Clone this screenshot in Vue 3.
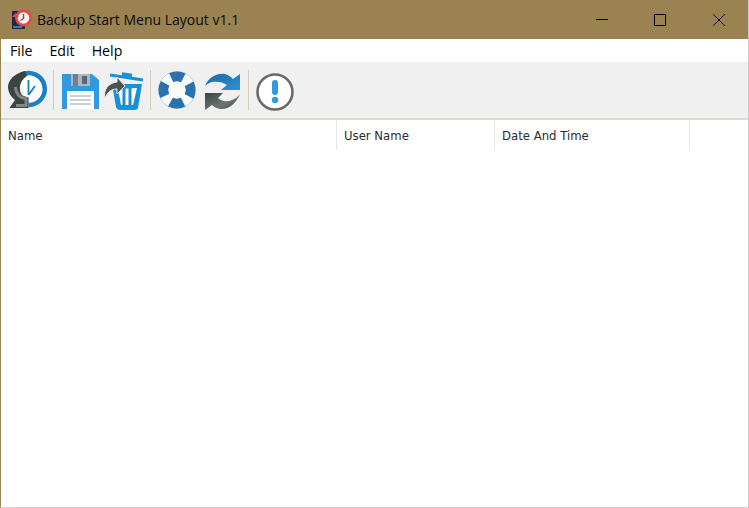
<script setup>
const menus = ['File', 'Edit', 'Help']
const columns = [
  { label: 'Name', width: '336px' },
  { label: 'User Name', width: '158px' },
  { label: 'Date And Time', width: '195px' },
  { label: '', width: '59px' }
]
</script>

<template>
  <div class="window">
    <header class="titlebar">
      <div class="title-left">
        <svg class="app-icon" width="22" height="22" viewBox="0 0 22 22">
          <rect x="1" y="2" width="13" height="18" fill="#1c2a44" />
          <rect x="2" y="17" width="9" height="2" fill="#3a76b8" />
          <circle cx="12.500" cy="9" r="8.500" fill="#e04a42" />
          <circle cx="12.500" cy="9" r="5.800" fill="#eef0f2" />
          <path d="M12.500 5V9.500L9.500 11.500" fill="none" stroke="#b33" stroke-width="1.400" />
          <path d="M1 8l3.500-4 3.500 4z" fill="#e04a42" />
        </svg>
        <span class="title">Backup Start Menu Layout v1.1</span>
      </div>
      <div class="controls">
        <span class="ctl"><svg width="12" height="12" viewBox="0 0 12 12"><path d="M0 5.500H12" stroke="#000" /></svg></span>
        <span class="ctl"><svg width="12" height="12" viewBox="0 0 12 12"><rect x=".5" y=".5" width="11" height="11" fill="none" stroke="#000" /></svg></span>
        <span class="ctl close"><svg width="12" height="12" viewBox="0 0 12 12"><path d="M0 0L12 12M12 0L0 12" stroke="#000" /></svg></span>
      </div>
    </header>

    <nav class="menubar">
      <span v-for="m in menus" :key="m" class="menu">{{ m }}</span>
    </nav>

    <div class="toolbar">
      <svg class="clock" width="44" height="44" viewBox="0 0 44 44">
        <path d="M14 21C14 14 18 7 23 7 31 7 38 13 38 21 38 29 31 37 23 37 18 37 14 28 14 21Z" fill="#fff" />
        <path d="M15 7A16 16 0 1 1 22.500 37" fill="none" stroke="#1b7fc4" stroke-width="4.500" />
        <path d="M22.500 12V27M22.500 27L29 18" fill="none" stroke="#1b7fc4" stroke-width="1.800" />
        <path d="M19 3C9 5 1.500 12 2 20 2.500 25 5 29 9 32L3.500 40H22.500V29C18 29 14.500 27 14 22 13.500 17 15 12 21 8Z" fill="#3a4541" />
        <path d="M10 37.500H20V30.500C14 30 10 26 9.500 19" fill="none" stroke="#7e8783" stroke-width="3" />
      </svg>
      <i class="sep s1"></i>
      <svg class="floppy low" width="37" height="35" viewBox="0 0 37 35">
        <path d="M0 0H30L37 6V35H0Z" fill="#2f9ade" />
        <rect x="9" y="0" width="19" height="12" fill="#a9b7c0" />
        <rect x="11" y="0" width="5" height="12" fill="#6f8190" />
        <rect x="20" y="2" width="5" height="8" fill="#566877" />
        <rect x="5" y="17" width="27" height="18" fill="#fff" />
        <path d="M8 22H29M8 26H29M8 30H29" stroke="#b5c3cc" stroke-width="1.400" />
      </svg>
      <svg class="trash low" width="42" height="39" viewBox="0 0 42 39">
        <path d="M7 3L40 8" stroke="#1b8fd6" stroke-width="3" />
        <path d="M19 2L29 3.500" stroke="#1b8fd6" stroke-width="3.500" />
        <path d="M9 12H39L35 36C34 38 32 38 30 38H17C15 38 14 37 13 35Z" fill="#1b8fd6" />
        <path d="M15 17L18 33H30L34 16Z" fill="#fff" />
        <path d="M21 16V34M27 16V34" stroke="#1b8fd6" stroke-width="3" />
        <path d="M2 26C0 18 5 11 14 10V5L22 14 14 22V17C8 17 5 20 2 26Z" fill="#4a5550" stroke="#f0f0f0" />
      </svg>
      <i class="sep s2"></i>
      <svg class="buoy" width="38" height="38" viewBox="0 0 38 38">
        <circle cx="19" cy="19" r="18.500" fill="#fff" stroke="#b5cfe2" />
        <circle cx="19" cy="19" r="13.500" fill="none" stroke="#2a72ad" stroke-width="10" stroke-dasharray="13 8.200" stroke-dashoffset="6.500" transform="rotate(-90 19 19)" />
        <circle cx="19" cy="19" r="8.500" fill="#fafafa" />
      </svg>
      <svg class="refresh low" width="39" height="39" viewBox="0 0 39 39">
        <defs>
          <linearGradient id="blueArrow" x1="0" y1="0" x2="1" y2="1">
            <stop offset="0" stop-color="#1c6aa3" />
            <stop offset="1" stop-color="#2f90d4" />
          </linearGradient>
          <linearGradient id="grayArrow" x1="0" y1="0" x2="1" y2="1">
            <stop offset="0" stop-color="#3a4541" />
            <stop offset=".6" stop-color="#6c7572" />
            <stop offset="1" stop-color="#2f3835" />
          </linearGradient>
        </defs>
        <path d="M2 14C6 5 14 1 22 2 26 3 28 5 30 7L37 2V18H18L24 13C20 10 14 9 9 10 6 11 4 12 2 14Z" fill="url(#blueArrow)" />
        <path d="M37 22C33 32 25 38 17 37 13 36 11 35 9 33L2 38V21H20L15 26C19 30 24 30 29 28 32 27 35 25 37 22Z" fill="url(#grayArrow)" />
      </svg>
      <i class="sep s3"></i>
      <svg class="alert low" width="38" height="38" viewBox="0 0 38 38">
        <circle cx="19" cy="19" r="17.500" fill="#fff" stroke="#666b6a" stroke-width="2.600" />
        <rect x="16" y="7" width="6" height="15" rx="3" fill="#2f9ade" />
        <circle cx="19" cy="27" r="3.200" fill="#2f9ade" />
      </svg>
    </div>

    <section class="list">
      <div class="list-head">
        <div v-for="c in columns" :key="c.label" class="col" :style="{ width: c.width }">{{ c.label }}</div>
      </div>
    </section>
  </div>
</template>

<style scoped>
.window {
  width: 749px;
  height: 508px;
  display: flex;
  flex-direction: column;
  box-sizing: border-box;
  background: #fff;
  border-left: 1px solid #9a8350;
  border-right: 1px solid #c9c9c9;
  border-bottom: 1px solid #d0d0d0;
  overflow: hidden;
  font-family: "Open Sans", "Noto Sans", sans-serif;
  color: #000;
}
.titlebar {
  height: 39px;
  margin: 0 -1px;
  padding-left: 11px;
  background: #9a8350;
  display: flex;
  align-items: center;
  justify-content: space-between;
  flex: none;
}
.title-left { display: flex; align-items: center; gap: 4px; }
.title { font-size: 14px; color: #0a0a0a; }
.controls { display: flex; }
.ctl {
  width: 58px;
  height: 39px;
  display: flex;
  align-items: center;
  justify-content: center;
}
.close { width: 60px; }
.menubar {
  height: 23px;
  display: flex;
  align-items: center;
  flex: none;
  padding-left: 9px;
  gap: 17px;
  font-size: 14.2px;
}
.toolbar {
  height: 56px;
  flex: none;
  background: #f0f0f0;
  display: flex;
  align-items: center;
  padding-left: 5px;
}
.toolbar svg { display: block; flex: none; }
.low { margin-top: 3px; }
.floppy { margin-right: 4px; }
.buoy { margin-right: 7px; }
.sep {
  width: 1px;
  height: 40px;
  background: #d4ceb8;
  flex: none;
}
.s1 { margin: 0 8px 0 3px; }
.s2 { margin: 0 7px 0 5px; }
.s3 { margin: 0 7px 0 6px; }
.list {
  flex: 1;
  border-top: 2px solid #ded9c6;
  background: #fff;
}
.list-head { display: flex; height: 30px; }
.col {
  box-sizing: border-box;
  border-right: 1px solid #e5e5e5;
  padding: 2px 0 0 7px;
  font-family: "DejaVu Sans", sans-serif;
  font-size: 11.7px;
  line-height: 28px;
  color: #2b2b2b;
  flex: none;
}
.col:last-child { border-right: 0; }
</style>
